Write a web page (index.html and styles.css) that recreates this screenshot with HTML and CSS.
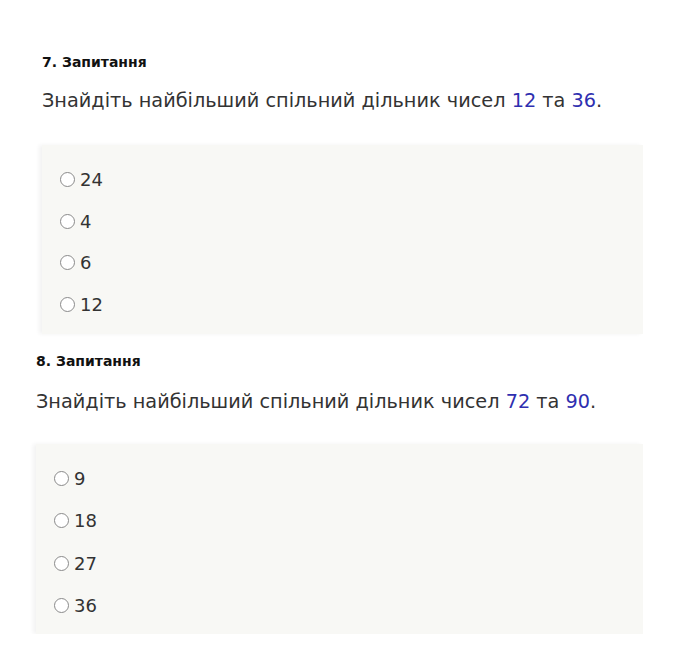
FILE: index.html
```html
<!DOCTYPE html>
<html lang="uk">
<head>
	<meta charset="UTF-8">
	<title>Запитання</title>
	<link rel="stylesheet" href="styles.css">
</head>
<body>
	<div class="quiz">
		<div class="question q7">
			<h4 class="q-title">7. Запитання</h4>
			<p class="q-text">Знайдіть найбільший спільний дільник чисел <span class="num">12</span> та <span class="num">36</span>.</p>
			<ul class="answers">
				<li><label><input type="radio" name="q7">24</label></li>
				<li><label><input type="radio" name="q7">4</label></li>
				<li><label><input type="radio" name="q7">6</label></li>
				<li><label><input type="radio" name="q7">12</label></li>
			</ul>
		</div>
		<div class="question q8">
			<h4 class="q-title">8. Запитання</h4>
			<p class="q-text">Знайдіть найбільший спільний дільник чисел <span class="num">72</span> та <span class="num">90</span>.</p>
			<ul class="answers">
				<li><label><input type="radio" name="q8">9</label></li>
				<li><label><input type="radio" name="q8">18</label></li>
				<li><label><input type="radio" name="q8">27</label></li>
				<li><label><input type="radio" name="q8">36</label></li>
			</ul>
		</div>
	</div>
</body>
</html>
```

FILE: styles.css
```css
body, ul, li, h4, p {
	margin: 0;
	padding: 0;
}

body {
	background-color: #FFF;
	font-family: "DejaVu Sans", "Noto Sans", sans-serif;
	color: #333;
}

.quiz {
	width: 643px;
	padding-top: 54px;
}

.q7 {
	margin-left: 42px;
}

/* друге питання зсунуте трохи лівіше */
.q8 {
	margin-left: 36px;
	margin-top: 19px;
}

.q-title {
	font-size: 14px;
	font-weight: bold;
	color: #111;
	line-height: 16px;
}

.q-text {
	margin-top: 18px;
	font-size: 19.3px;
	line-height: 26px;
	color: #333;
}

.q8 .q-text {
	margin-top: 20px;
}

.q-text .num {
	color: #2F2FB0;
}

.answers {
	list-style: none;
	margin-top: 31px;
	padding: 14px 0 9px 18px;
	background-color: #F8F8F5;
	box-shadow: -3px 0 4px rgba(0, 0, 0, 0.05);
}

.q8 .answers {
	margin-top: 29px;
	padding-top: 13px;
	padding-bottom: 7px;
}

.answers li {
	height: 41.6px;
	display: flex;
	align-items: center;
}

.q8 .answers li {
	height: 42.4px;
}

.answers label {
	display: flex;
	align-items: center;
	font-size: 18px;
	color: #333;
}

.answers input {
	-webkit-appearance: none;
	appearance: none;
	width: 15px;
	height: 15px;
	margin: 0 5px 0 0;
	border: 1px solid #8A8A8A;
	border-radius: 50%;
	background-color: #FFF;
	box-sizing: border-box;
}
```
